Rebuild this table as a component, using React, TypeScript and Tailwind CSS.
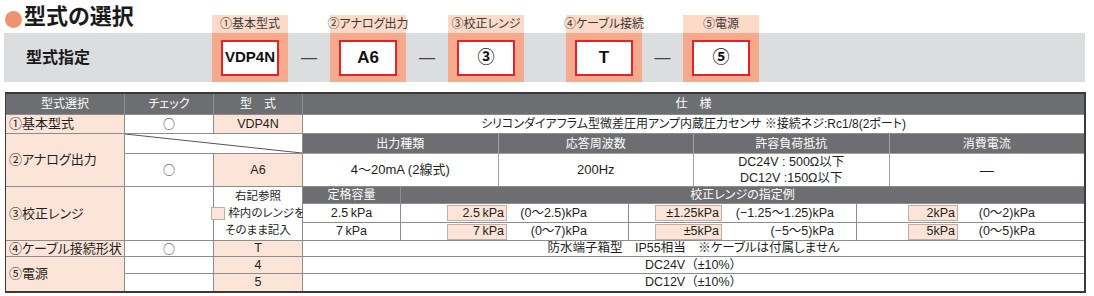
import React from 'react';

const parts = [
  { label: '①基本型式', value: 'VDP4N', gap: '—', small: true },
  { label: '②アナログ出力', value: 'A6', gap: '—' },
  { label: '③校正レンジ', value: '③', gap: '' },
  { label: '④ケーブル接続', value: 'T', gap: '—' },
  { label: '⑤電源', value: '⑤', gap: null },
];

const gapWidths = ['w-[42px]', 'w-[42px]', 'w-[42px]', 'w-[41px]'];

const ModelBar = () => (
  <div className="ml-[4px] flex h-[82px] w-[1081px] bg-[linear-gradient(to_bottom,transparent_33px,#dcddde_33px)]">
    <div className="flex w-[208px] flex-col">
      <div className="-ml-[4px] flex h-[33px] items-start pt-[5px]">
        <span className="ml-[5px] mt-[6px] h-[17px] w-[17px] rounded-full bg-[#f1916f]" />
        <span className="ml-[2px] text-[22px] font-bold leading-[24px] text-[#1a1a1a]">型式の選択</span>
      </div>
      <div className="flex flex-1 items-center pl-[22px] text-[16px] font-bold text-[#1a1a1a]">型式指定</div>
    </div>

    {parts.map((p, i) => (
      <React.Fragment key={p.label}>
        <div className="mt-[15px] flex w-[76px] flex-col">
          <div className="flex h-[18px] items-center justify-center whitespace-nowrap bg-[#fdd9c8] text-[12px] text-[#3a3a3a]">
            {p.label}
          </div>
          <div className="flex h-[49px] items-center justify-center bg-[#f6aa8d]">
            <div
              className={`flex h-[36px] w-[58px] items-center justify-center border-2 border-[#e8202a] bg-white font-bold text-[#111] ${
                p.small ? 'text-[15px]' : 'text-[17px]'
              }`}
            >
              {p.value}
            </div>
          </div>
        </div>
        {p.gap !== null && (
          <div className={`${gapWidths[i]} flex items-center justify-center pt-[33px] text-[16px] text-[#444]`}>
            {p.gap}
          </div>
        )}
      </React.Fragment>
    ))}
  </div>
);

const head = 'flex items-center justify-center whitespace-nowrap bg-[#6d6e71] text-[12px] text-white';
const left = 'flex items-center whitespace-nowrap bg-[#fde4d8] pl-[3px] text-[13px]';
const mid = 'flex items-center justify-center whitespace-nowrap bg-white text-[12.5px]';
const pinkMid = 'flex items-center justify-center bg-[#fde4d8] text-[12.5px]';

const Circle = () => <span className="font-['Noto_Sans_CJK_JP',sans-serif] text-[12px] text-[#333]">○</span>;

const RangeBox = ({ w, children }: { w: string; children: React.ReactNode }) => (
  <span className={`${w} flex h-[16px] items-center justify-end border border-[#c6aea4] bg-[#fde4d8] pr-[2px] leading-none`}>
    {children}
  </span>
);

const examples = [
  ['2.5\u2009kPa', '(0～2.5)kPa', '±1.25kPa', '(−1.25～1.25)kPa', '2kPa', '(0～2)kPa'],
  ['7\u2009kPa', '(0～7)kPa', '±5kPa', '(−5～5)kPa', '5kPa', '(0～5)kPa'],
];

const SpecTable = () => (
  <div className="ml-[5px] mt-[10px] w-[1081px] border-b-2 border-l border-r-2 border-t-2 border-[#3a3a3a]">
    <div className="grid grid-cols-[118px_88px_88px_1fr] grid-rows-[20px_18px_19px_32px_16px_18px_17px_15px_16px_17px] gap-px bg-[#8d8d8d]">
      {/* header */}
      <div className={`${head} col-start-1 row-start-1`}>型式選択</div>
      <div className={`${head} col-start-2 row-start-1`}>チェック</div>
      <div className={`${head} col-start-3 row-start-1`}>型　式</div>
      <div className={`${head} col-start-4 row-start-1`}>仕　様</div>

      {/* left column */}
      <div className={`${left} col-start-1 row-start-2`}>①基本型式</div>
      <div className={`${left} col-start-1 row-start-3 row-span-2`}>②アナログ出力</div>
      <div className={`${left} col-start-1 row-start-5 row-span-3`}>③校正レンジ</div>
      <div className={`${left} col-start-1 row-start-8`}>④ケーブル接続形状</div>
      <div className={`${left} col-start-1 row-start-9 row-span-2`}>⑤電源</div>

      {/* check column */}
      <div className={`${mid} col-start-2 row-start-2`}><Circle /></div>
      <div className="relative col-span-2 col-start-2 row-start-3 bg-white">
        <svg className="absolute inset-0 h-full w-full" viewBox="0 0 100 100" preserveAspectRatio="none">
          <line x1="0" y1="0" x2="100" y2="100" stroke="#555" strokeWidth="1" vectorEffect="non-scaling-stroke" />
        </svg>
      </div>
      <div className={`${mid} col-start-2 row-start-4`}><Circle /></div>
      <div className={`${mid} col-start-2 row-start-5 row-span-3`} />
      <div className={`${mid} col-start-2 row-start-8`}><Circle /></div>
      <div className={`${mid} col-start-2 row-start-9`} />
      <div className={`${mid} col-start-2 row-start-10`} />

      {/* model column */}
      <div className={`${pinkMid} col-start-3 row-start-2`}>VDP4N</div>
      <div className={`${pinkMid} col-start-3 row-start-4`}>A6</div>
      <div className="col-start-3 row-start-5 row-span-3 flex flex-col items-center justify-center whitespace-nowrap bg-white text-[11.5px] leading-[17px]">
        <span>右記参照</span>
        <span className="flex items-center">
          <span className="mr-[3px] h-[13px] w-[14px] border border-[#c6aea4] bg-[#fde4d8]" />
          枠内のレンジを
        </span>
        <span>そのまま記入</span>
      </div>
      <div className={`${pinkMid} col-start-3 row-start-8`}>T</div>
      <div className={`${pinkMid} col-start-3 row-start-9`}>4</div>
      <div className={`${pinkMid} col-start-3 row-start-10`}>5</div>

      {/* spec column */}
      <div className={`${mid} col-start-4 row-start-2 text-[12px]`}>
        シリコンダイアフラム型微差圧用アンプ内蔵圧力センサ ※接続ネジ:Rc1/8(2ポート)
      </div>

      <div className="col-start-4 row-start-3 row-span-2 grid grid-cols-4 grid-rows-[19px_32px] gap-px bg-[#a3a3a3]">
        <div className={head}>出力種類</div>
        <div className={head}>応答周波数</div>
        <div className={head}>許容負荷抵抗</div>
        <div className={head}>消費電流</div>
        <div className={`${mid} text-[13px]`}>4～20mA (2線式)</div>
        <div className={`${mid} text-[13px]`}>200Hz</div>
        <div className={`${mid} flex-col leading-[16px]`}>
          <span>DC24V : 500Ω以下</span>
          <span>DC12V :150Ω以下</span>
        </div>
        <div className={`${mid} text-[14px]`}>—</div>
      </div>

      <div className="col-start-4 row-start-5 row-span-3 grid grid-cols-[97px_227px_227px_1fr] grid-rows-[16px_18px_17px] gap-px bg-[#8d8d8d]">
        <div className={head}>定格容量</div>
        <div className={`${head} col-span-3`}>校正レンジの指定例</div>
        {examples.map((r) => (
          <React.Fragment key={r[0]}>
            <div className={mid}>{r[0]}</div>
            <div className="flex items-center whitespace-nowrap bg-white text-[12.5px]">
              <span className="ml-[46px]"><RangeBox w="w-[60px]">{r[0]}</RangeBox></span>
              <span className="w-[80px] text-right">{r[1]}</span>
            </div>
            <div className="flex items-center whitespace-nowrap bg-white text-[12.5px]">
              <span className="ml-[26px]"><RangeBox w="w-[67px]">{r[2]}</RangeBox></span>
              <span className="w-[112px] text-right">{r[3]}</span>
            </div>
            <div className="flex items-center whitespace-nowrap bg-white text-[12.5px]">
              <span className="ml-[51px]"><RangeBox w="w-[50px]">{r[4]}</RangeBox></span>
              <span className="w-[77px] text-right">{r[5]}</span>
            </div>
          </React.Fragment>
        ))}
      </div>

      <div className={`${mid} col-start-4 row-start-8`}>防水端子箱型　IP55相当　※ケーブルは付属しません</div>
      <div className={`${mid} col-start-4 row-start-9 [font-feature-settings:normal]`}>DC24V（±10%）</div>
      <div className={`${mid} col-start-4 row-start-10 [font-feature-settings:normal]`}>DC12V（±10%）</div>
    </div>
  </div>
);

export default function App() {
  return (
    <div className="h-[296px] w-[1094px] overflow-hidden bg-white font-['Liberation_Sans','Noto_Sans_CJK_JP',sans-serif] text-[#231f20] [font-feature-settings:'palt']">
      <ModelBar />
      <SpecTable />
    </div>
  );
}
